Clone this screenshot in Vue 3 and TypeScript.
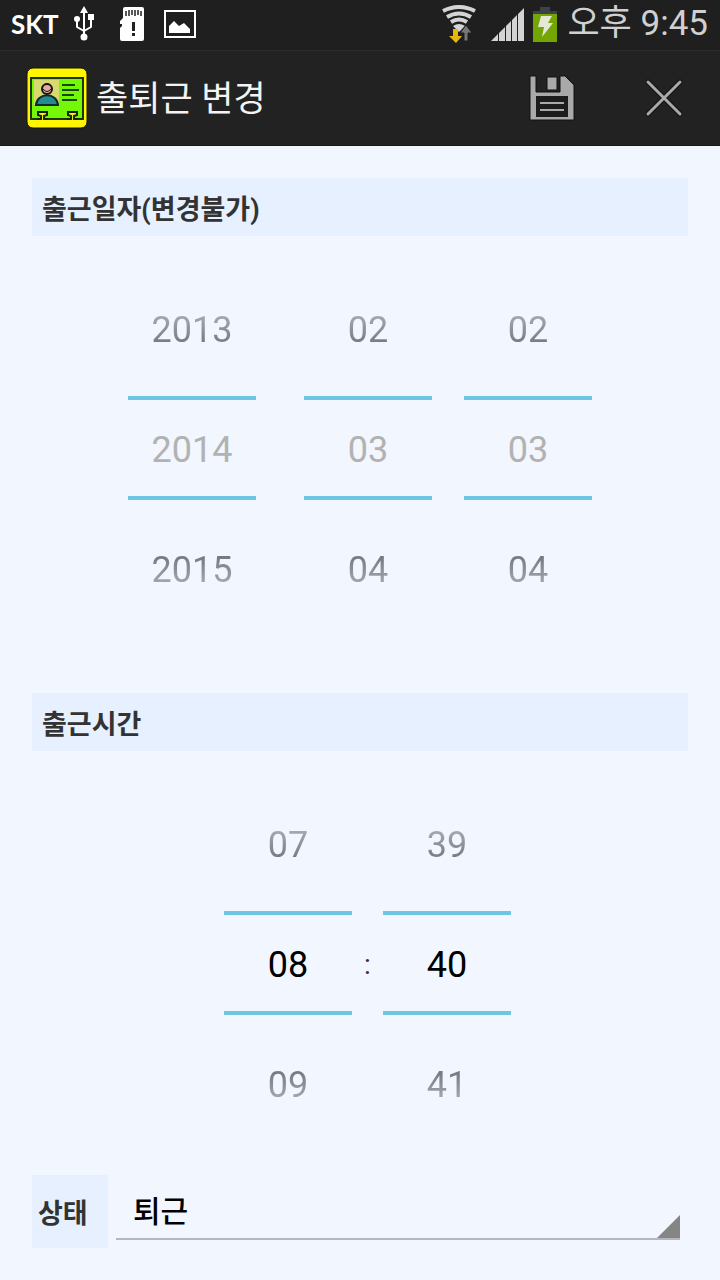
<script setup lang="ts">
import { computed, ref } from 'vue'

interface Wheel {
  id: string
  name: string
  value: number
  min: number
  max: number
  digits: number
  separator?: string
}

const dateWheels = ref<Wheel[]>([
  { id: 'year', name: '년', value: 2014, min: 1970, max: 2100, digits: 4 },
  { id: 'month', name: '월', value: 3, min: 1, max: 12, digits: 2 },
  { id: 'day', name: '일', value: 3, min: 1, max: 31, digits: 2 },
])

const timeWheels = ref<Wheel[]>([
  { id: 'hour', name: '시', value: 8, min: 0, max: 23, digits: 2 },
  { id: 'minute', name: '분', value: 40, min: 0, max: 59, digits: 2, separator: ':' },
])

const groups = computed(() => [
  { id: 'date', title: '출근일자(변경불가)', locked: true, wheels: dateWheels.value },
  { id: 'time', title: '출근시간', locked: false, wheels: timeWheels.value },
])

const status = ref('퇴근')

function wrapped(w: Wheel, step: number): number {
  const span = w.max - w.min + 1
  return ((w.value + step - w.min + span) % span) + w.min
}

function label(w: Wheel, step = 0): string {
  return String(wrapped(w, step)).padStart(w.digits, '0')
}

function move(w: Wheel, step: number) {
  w.value = wrapped(w, step)
}

function type(w: Wheel, event: Event) {
  const n = Number((event.target as HTMLInputElement).value)
  if (Number.isInteger(n) && n >= w.min && n <= w.max) w.value = n
}
</script>

<template>
  <div class="screen">
    <div class="statusbar">
      <span class="carrier">SKT</span>
      <svg class="usb" width="24" height="36" viewBox="0 0 24 36" fill="none" stroke="#fff" stroke-width="2">
        <path d="M12 5v26M12 25l-7-4v-7M12 25l7-4v-8" stroke-linejoin="round" />
        <path d="M12 0l4 7H8z" fill="#fff" stroke="none" />
        <circle cx="5" cy="13" r="3" fill="#fff" stroke="none" />
        <path d="M16 8h6v6h-6z" fill="#fff" stroke="none" />
        <circle cx="12" cy="31" r="3.5" fill="#fff" stroke="none" />
      </svg>
      <svg class="sd" width="24" height="34" viewBox="0 0 24 34">
        <path d="M5 0h17a2 2 0 0 1 2 2v30a2 2 0 0 1-2 2H2a2 2 0 0 1-2-2V21l2-2v-2H0v-3l3-3V2a2 2 0 0 1 2-2z" fill="#fff" />
        <path d="M6 4v5M9 3v6M12 3v5M15 3v6M18 3v5M21 4v5" stroke="#222" stroke-width="1.5" />
        <path d="M12 15h3v9h-3zM12 26h3v3h-3z" fill="#222" />
      </svg>
      <svg class="picture" width="32" height="28" viewBox="0 0 32 28">
        <path d="M1 1h30v26H1z" fill="none" stroke="#fff" stroke-width="2" />
        <path d="M5 23v-7l5-5 5 5 5-3 6 6v4z" fill="#fff" />
      </svg>
      <span class="spacer"></span>
      <svg class="wifi" width="36" height="38" viewBox="0 0 36 38" fill="none" stroke="#d4d4d4" stroke-width="4">
        <path d="M1 6q16-8 32 0M5 12q12-7 24 0M9 17q8-5 16 0" />
        <path d="M11 21q6-4 12 0l-6 6z" fill="#d4d4d4" stroke="none" />
        <path d="M11 24h5v7h4l-6 7-7-7h4z" fill="#e8b70c" stroke="none" />
        <path d="M24 20l6 8h-4v8h-4v-8h-4z" fill="#777" stroke="#1f1f1f" stroke-width="1" />
      </svg>
      <svg class="signal" width="34" height="34" viewBox="0 0 34 34" fill="#d4d4d4">
        <path d="M0 34l7-7v7zM8 26l6-6v14H8zM15 19l5-5v20h-5zM21 13l5-5v26h-5zM27 7l6-6v33h-6z" />
      </svg>
      <svg class="battery" width="24" height="36" viewBox="0 0 24 36">
        <path d="M7 1h10v4h7v4H0V5h7z" fill="#3d4248" />
        <path d="M0 8h24v28H0z" fill="#73a602" />
        <path d="M8 10h11l-4 7h5L9 31l2-10H5z" fill="#e3e8d7" />
      </svg>
      <time class="clock">오후 9:45</time>
    </div>

    <header class="appbar">
      <svg class="logo" width="62" height="62" viewBox="0 0 62 62">
        <rect x="1" y="1" width="60" height="60" rx="6" fill="#fff600" stroke="#151500" />
        <path d="M5 11h52v41H5z" fill="#74f808" stroke="#1c3505" stroke-width="2" />
        <path d="M8 13h25v25H8z" fill="#d8da70" />
        <circle cx="21" cy="22" r="5" fill="#e7aaa0" stroke="#161616" stroke-width="2" />
        <path d="M17 19q4-5 8 0M17 22q4 5 8 0" fill="none" stroke="#161616" />
        <path d="M10 38c1-13 21-13 22 0z" fill="#228c91" stroke="#102a2c" stroke-width="2" />
        <path d="M36 18h13M36 23h17M36 28h12M36 33h15" stroke="#174700" stroke-width="2" />
        <path d="M12 53v-1h3v-3l-3-1v-3h9v3l-3 1v3h3v1zM41 53v-1h4v-3l-3-1v-3h9v3l-3 1v3h3v1z" fill="#f5f000" />
        <path d="M11 52h4v-3l-3-1v-3h9v3l-3 1v3h4M41 52h4v-3l-3-1v-3h9v3l-3 1v3h4" fill="none" stroke="#162300" stroke-width="2" />
      </svg>
      <h1>출퇴근 변경</h1>
      <button class="action" type="button" aria-label="저장">
        <svg width="46" height="46" viewBox="0 0 46 46">
          <path d="M1 1h6v16h24V1h5l9 9v35H1zM18 2h10v13H18z" fill="#a9a9a9" stroke="#111" stroke-width="1" />
          <path d="M7 21h32v21H7z" fill="#1c1c1c" />
          <path d="M11 28h24M11 35h24" stroke="#a9a9a9" stroke-width="2" />
        </svg>
      </button>
      <button class="action" type="button" aria-label="닫기">
        <svg width="46" height="46" viewBox="0 0 46 46" fill="none">
          <path d="M7 7l32 32M39 7L7 39" stroke="#111" stroke-width="5" stroke-linecap="round" />
          <path d="M7 7l32 32M39 7L7 39" stroke="#aaa" stroke-width="3" stroke-linecap="round" />
        </svg>
      </button>
    </header>

    <main>
      <section v-for="g in groups" :key="g.id" :class="['group', g.id]" :aria-labelledby="g.id + '-title'">
        <h2 :id="g.id + '-title'">{{ g.title }}</h2>
        <div class="wheels">
          <template v-for="w in g.wheels" :key="w.id">
            <span v-if="w.separator" class="separator">{{ w.separator }}</span>
            <div :class="['wheel', w.id]">
              <button class="step prev" type="button" :disabled="g.locked" @click="move(w, -1)">{{ label(w, -1) }}</button>
              <input
                class="current"
                type="text"
                inputmode="numeric"
                :aria-label="w.name"
                :value="label(w)"
                :disabled="g.locked"
                @change="type(w, $event)"
              />
              <button class="step next" type="button" :disabled="g.locked" @click="move(w, 1)">{{ label(w, 1) }}</button>
            </div>
          </template>
        </div>
      </section>

      <div class="status">
        <label for="status">상태</label>
        <select id="status" v-model="status">
          <option>퇴근</option>
          <option>출근</option>
        </select>
      </div>
    </main>
  </div>
</template>

<style>
body {
  margin: 0;
  background: #f1f6ff;
}
</style>

<style scoped>
.screen {
  font-family: Roboto, "Noto Sans CJK KR", sans-serif;
  color: #333;
}

.screen * {
  box-sizing: border-box;
}

.screen svg {
  display: block;
  flex: none;
}

.statusbar {
  display: flex;
  align-items: center;
  height: 51px;
  padding: 0 12px 2px 11px;
  background: #1f1f1f;
  border-bottom: 1px solid #2b2b2b;
}

.carrier {
  font: 700 26px/32px Lato, sans-serif;
  color: #fff;
}

.usb {
  margin-left: 13px;
}

.sd {
  margin-left: 24px;
}

.picture {
  margin-left: 20px;
}

.spacer {
  flex: 1;
}

.signal {
  margin-left: 13px;
}

.battery {
  margin-left: 8px;
}

.clock {
  margin-left: 10px;
  font-size: 35px;
  line-height: 46px;
  font-weight: 400;
  color: #d0d0d0;
  white-space: nowrap;
}

.appbar {
  display: flex;
  align-items: center;
  height: 95px;
  padding-left: 26px;
  background: #222;
  border-bottom: 1px solid #191919;
}

h1 {
  flex: 1;
  margin: 0 0 0 8px;
  padding-top: 4px;
  font-size: 35px;
  line-height: 48px;
  font-weight: 400;
  color: #f3f3f3;
}

.action {
  display: grid;
  place-items: center;
  width: 112px;
  height: 94px;
  padding: 0;
  border: 0;
  background: none;
}

main {
  padding: 32px;
}

h2 {
  margin: 0;
  padding: 6px 10px 0;
  background: #e6f0ff;
  font-size: 27px;
  line-height: 52px;
  font-weight: 700;
}

.wheels {
  display: flex;
  justify-content: center;
  align-items: center;
  padding-top: 34px;
}

.date .wheels {
  padding-bottom: 63px;
}

.time .wheels {
  padding-left: 15px;
  padding-bottom: 30px;
}

.wheel {
  display: flex;
  flex-direction: column;
  width: 128px;
}

.month {
  margin-left: 48px;
}

.day {
  margin-left: 32px;
}

.separator {
  width: 31px;
  font-size: 28px;
  line-height: 32px;
  text-align: center;
}

.step,
.current {
  width: 100%;
  padding: 0;
  border: 0;
  border-radius: 0;
  background: none;
  font-family: inherit;
  font-size: 36px;
  text-align: center;
}

.step {
  height: 120px;
  color: transparent;
  -webkit-background-clip: text;
  background-clip: text;
}

.prev {
  background-image: linear-gradient(#f1f6ff, #50535a 80%);
}

.next {
  background-image: linear-gradient(#50535a 20%, #f1f6ff);
}

.current {
  height: 104px;
  margin: 6px 0 10px;
  padding-top: 4px;
  border-top: 4px solid #6ec6e3;
  border-bottom: 4px solid #6ec6e3;
  color: #000;
}

.current:disabled {
  color: #b2b2b2;
}

.status {
  display: flex;
  align-items: flex-start;
  gap: 8px;
  padding-right: 8px;
}

label {
  width: 76px;
  padding: 6px 0 0 6px;
  background: #e6f0ff;
  font-size: 27px;
  line-height: 67px;
  font-weight: 700;
}

select {
  flex: 1;
  height: 65px;
  padding: 10px 40px 0 17px;
  appearance: none;
  border: 0;
  border-bottom: 2px solid #b4b7bf;
  border-radius: 0;
  background: linear-gradient(135deg, transparent 48%, #858585 52%) right bottom / 25px 25px no-repeat border-box;
  font-family: inherit;
  font-size: 30px;
  font-weight: 500;
  color: #000;
}
</style>
